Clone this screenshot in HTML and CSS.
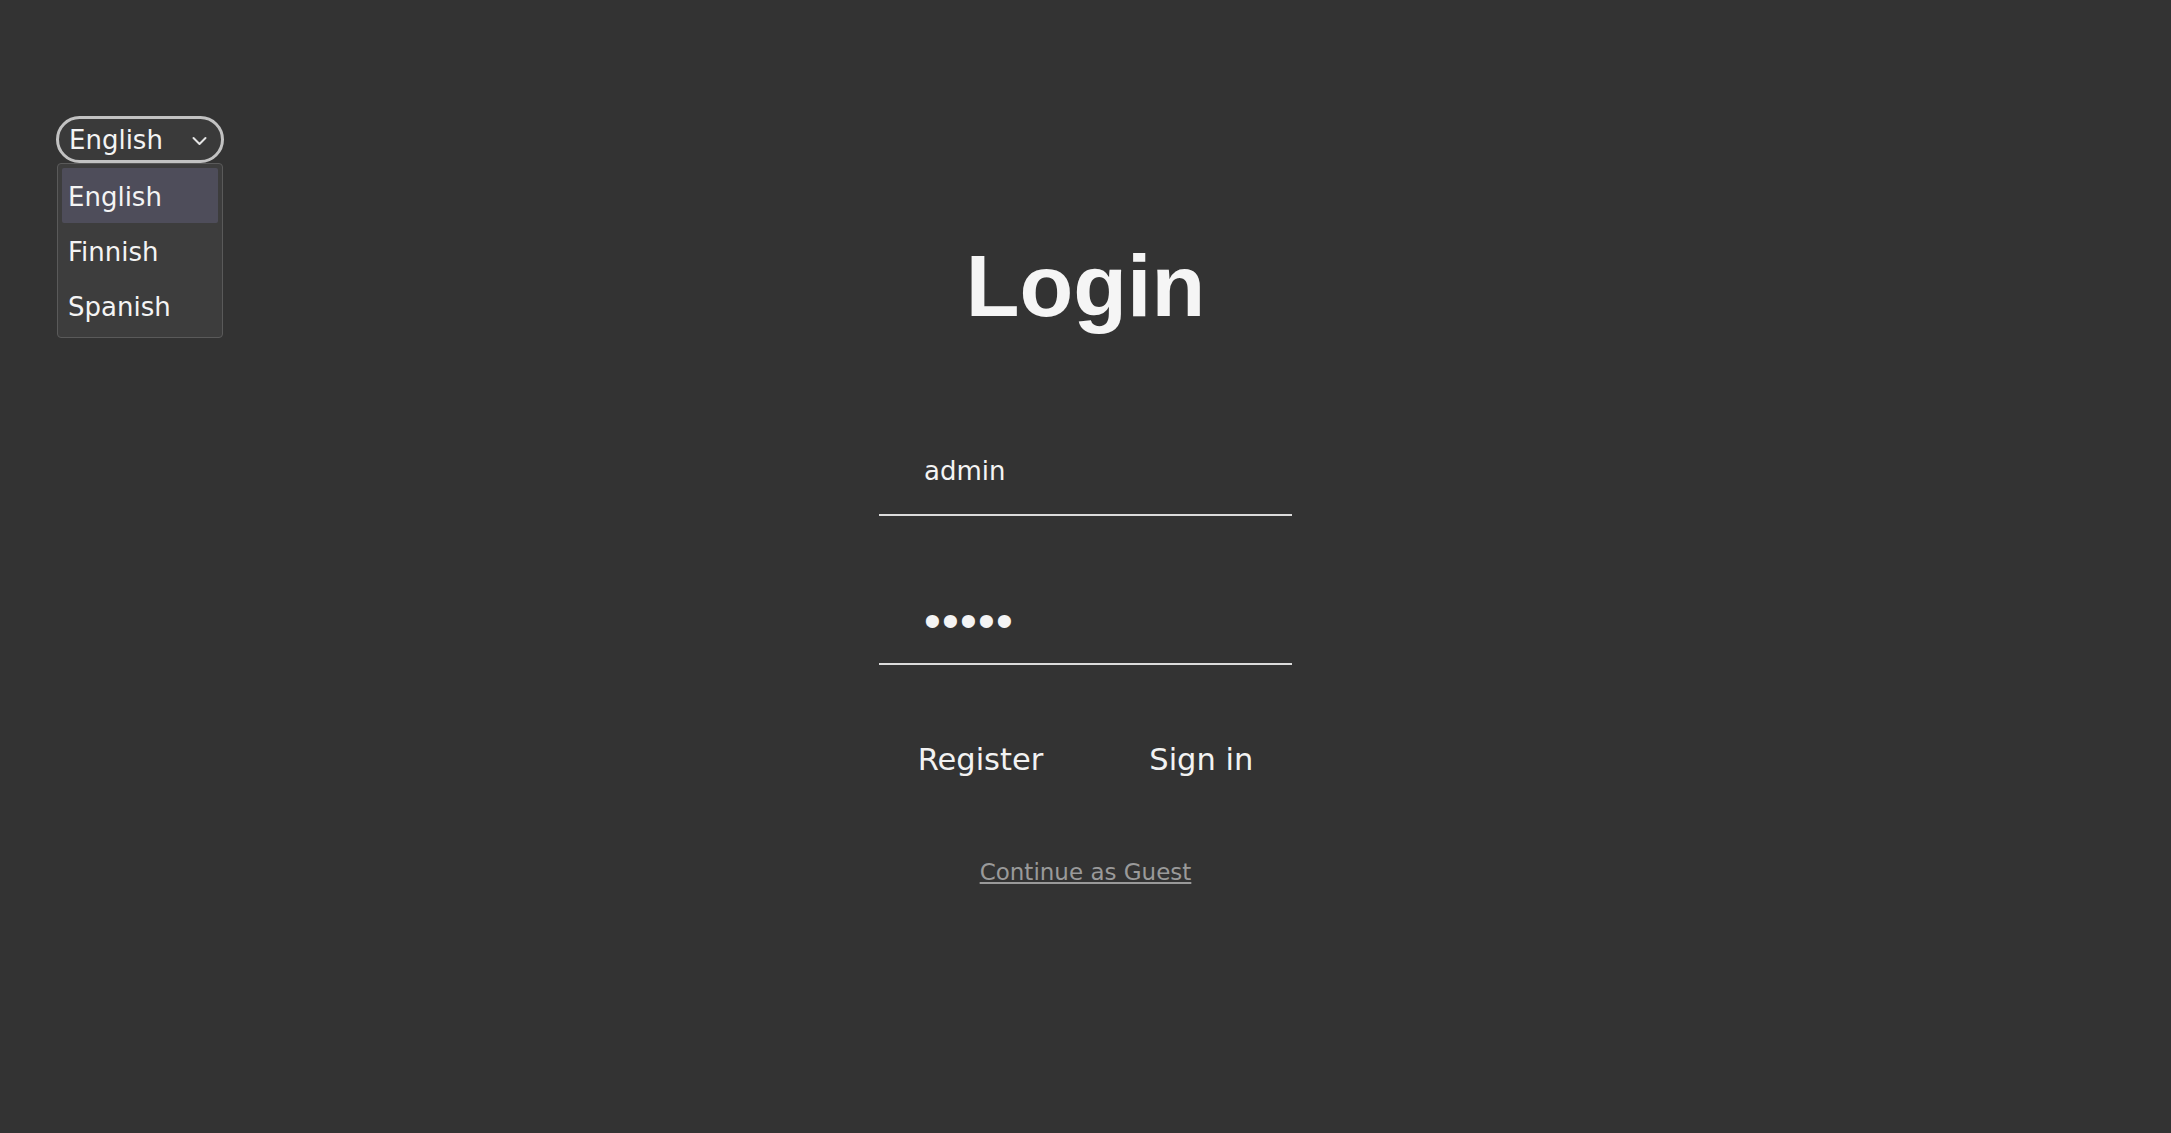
FILE: index.html
```html
<!DOCTYPE html>
<html lang="en">
<head>
<meta charset="utf-8">
<title>Login</title>
<link rel="stylesheet" href="styles.css">
</head>
<body>
<header class="lang">
  <div class="select-wrap">
    <div class="select">
      <span class="select-label">English</span>
      <svg class="chevron" width="15" height="10" viewBox="0 0 15 10"><polyline points="1.5,2 7.5,8 13.5,2" fill="none" stroke="#e4e4e4" stroke-width="2" stroke-linecap="round" stroke-linejoin="round"/></svg>
    </div>
    <ul class="menu">
      <li class="menu-item active">English</li>
      <li class="menu-item">Finnish</li>
      <li class="menu-item">Spanish</li>
    </ul>
  </div>
</header>
<main class="login">
  <h1 class="title">Login</h1>
  <form class="form">
    <input class="field field-user" type="text" value="admin">
    <input class="field field-pass" type="password" value="admin">
    <div class="actions">
      <button type="button" class="btn">Register</button>
      <button type="button" class="btn">Sign in</button>
    </div>
    <a class="guest" href="#">Continue as Guest</a>
  </form>
</main>
</body>
</html>
```
FILE: styles.css
```css
html, body {
  margin: 0;
  padding: 0;
}
body {
  background: #333333;
  color: #f2f2f2;
  font-family: "DejaVu Sans", Verdana, sans-serif;
  min-height: 1133px;
}
.lang {
  padding: 116px 0 0 56px;
}
.select-wrap {
  position: relative;
  width: 168px;
}
.select {
  box-sizing: border-box;
  height: 47px;
  border: 3px solid #c2c2c2;
  border-radius: 24px;
  background: #3a3a3a;
  display: flex;
  align-items: center;
  justify-content: space-between;
  padding: 2px 14px 0 10px;
}
.select-label {
  font-size: 26px;
  line-height: 39px;
  color: #f4f4f4;
}
.chevron {
  display: block;
}
.menu {
  position: absolute;
  top: 47px;
  left: 1px;
  width: 166px;
  box-sizing: border-box;
  margin: 0;
  padding: 4px;
  list-style: none;
  background: #3d3d3d;
  border: 1px solid #5a5a5a;
  border-radius: 4px;
}
.menu-item {
  font-size: 26px;
  line-height: 52px;
  padding: 3px 0 0 6px;
  color: #f4f4f4;
  border-radius: 2px;
}
.menu-item.active {
  background: #4e4d5a;
}
.login {
  display: flex;
  flex-direction: column;
  align-items: center;
}
.title {
  margin: 73px 0 0;
  font-family: "Liberation Sans", Arial, sans-serif;
  font-weight: bold;
  font-size: 88px;
  line-height: 100px;
  color: #f5f5f5;
}
.form {
  display: flex;
  flex-direction: column;
  align-items: center;
}
.field {
  box-sizing: border-box;
  width: 413px;
  height: 82px;
  margin: 98px 0 0;
  padding: 0 0 6px 45px;
  background: transparent;
  border: none;
  border-bottom: 2px solid #dcdcdc;
  outline: none;
  color: #f4f4f4;
  font-family: "DejaVu Sans", Verdana, sans-serif;
  font-size: 26px;
}
.field-pass {
  margin-top: 67px;
  padding: 0 0 6px 45px;
  font-family: "Liberation Sans", Arial, sans-serif;
  font-size: 48px;
  letter-spacing: 1.2px;
}
.actions {
  display: flex;
  gap: 106px;
  margin-top: 77px;
}
.btn {
  padding: 0;
  background: none;
  border: none;
  color: #f2f2f2;
  font-family: "DejaVu Sans", Verdana, sans-serif;
  font-size: 30.5px;
  line-height: 36px;
}
.guest {
  margin-top: 81px;
  font-size: 23px;
  line-height: 27px;
  color: #9a9a9a;
  text-decoration: underline;
}
```
